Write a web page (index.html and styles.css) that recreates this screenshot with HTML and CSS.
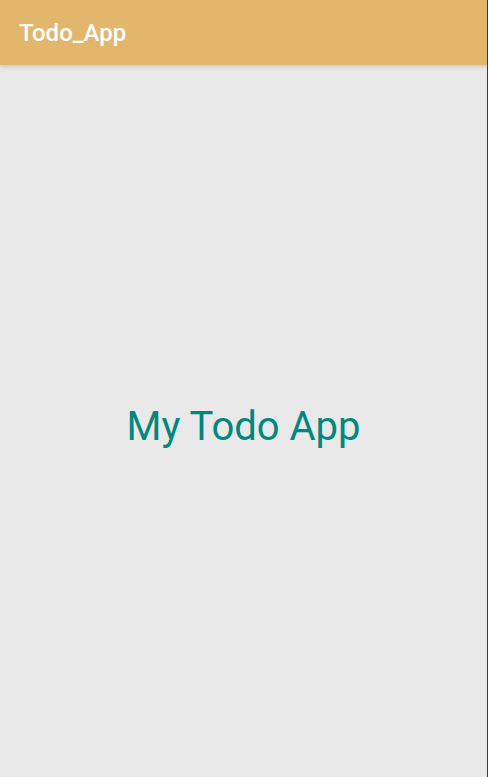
FILE: index.html
```html
<!DOCTYPE html>
<html>
<head>
<meta charset="utf-8">
<link rel="stylesheet" href="styles.css">
</head>
<body>
<div class="screen">
  <header class="appbar"><span class="title">Todo_App</span></header>
  <main class="content"><h1 class="headline">My Todo App</h1></main>
</div>
<div class="edge"></div>
</body>
</html>
```
FILE: styles.css
```css
html, body { margin: 0; padding: 0; height: 100%; }
body { display: flex; font-family: Roboto, "Noto Sans", sans-serif; background: #e9e9e9; overflow: hidden; }
.screen { flex: 1; display: flex; flex-direction: column; height: 777px; background: #e9e9e9; }
.appbar { height: 65px; flex: none; background: #e2b76b; display: flex; align-items: center; padding-left: 19px; box-shadow: 0 2px 4px rgba(0,0,0,0.14); position: relative; z-index: 1; }
.title { color: #fff; font-size: 24px; font-weight: 500; margin-top: 1px; }
.content { flex: 1; display: flex; align-items: center; justify-content: center; padding-top: 10px; }
.headline { margin: 0; font-weight: 400; font-size: 40px; color: #00877f; }
.edge { width: 1px; flex: none; height: 777px; background: #3a3a3a; }
```
